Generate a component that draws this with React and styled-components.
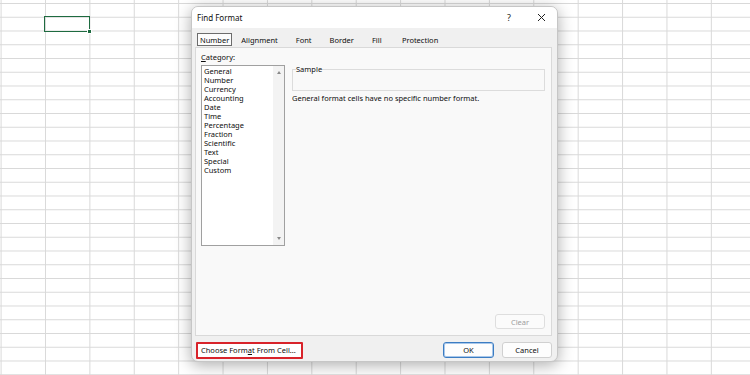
import React from 'react';
import styled, { createGlobalStyle } from 'styled-components';

const GlobalStyle = createGlobalStyle`
    html, body {
        margin: 0;
        padding: 0;
        background: #fff;
    }
    body {
        font-family: "Noto Sans", "Open Sans", sans-serif;
    }
`;

const Sheet = styled.div`
    position: relative;
    width: 750px;
    height: 375px;
    overflow: hidden;
    background-color: #fff;
    background-image: linear-gradient(to right, #d9d9d9 1px, transparent 1px),
        linear-gradient(to bottom, #d9d9d9 1px, transparent 1px);
    background-size: 44.4px 13.75px;
    background-position: 0.6px 3px;
`;

const ActiveCell = styled.div`
    position: absolute;
    left: 44px;
    top: 16px;
    width: 46px;
    height: 16px;
    box-sizing: border-box;
    border: 1.5px solid #1e6b40;

    &::after {
        content: '';
        position: absolute;
        right: -3px;
        bottom: -3px;
        width: 3px;
        height: 3px;
        background: #1e6b40;
        border: 1px solid #fff;
    }
`;

const Dialog = styled.div`
    position: absolute;
    left: 191px;
    top: 6px;
    width: 367px;
    height: 356px;
    box-sizing: border-box;
    display: flex;
    flex-direction: column;
    border: 1px solid #c6c6c6;
    border-radius: 7px;
    overflow: hidden;
    background: #f0f0f0;
    box-shadow: 0 3px 16px rgba(0, 0, 0, 0.33);
    font-size: 7.5px;
    color: #0d0d0d;
`;

const TitleBar = styled.div`
    display: flex;
    align-items: center;
    height: 21px;
    flex-shrink: 0;
    padding-left: 5px;
    background: #fff;
`;

const Title = styled.div`
    flex: 1;
    font-size: 8px;
`;

const TitleButton = styled.div`
    width: 32px;
    height: 21px;
    display: flex;
    align-items: center;
    justify-content: center;
    font-size: 9px;
    color: #222;
`;

const Body = styled.div`
    flex: 1;
    display: flex;
    flex-direction: column;
    padding: 5px 5px 0 3px;
    min-height: 0;
`;

const TabRow = styled.div`
    display: flex;
    height: 13px;
    margin-bottom: 1px;
    padding-left: 2px;
`;

const Tab = styled.div`
    display: flex;
    align-items: center;
    box-sizing: border-box;
    padding: 0 ${(p) => (p.$active ? '2px' : '8px')};
    min-width: ${(p) => p.$min || 0}px;
    border: 1px solid ${(p) => (p.$active ? '#6c6c6c' : 'transparent')};
    background: ${(p) => (p.$active ? '#fcfcfc' : 'transparent')};
    white-space: nowrap;
`;

const Panel = styled.div`
    flex: 1;
    display: grid;
    grid-template-columns: 84px 1fr;
    column-gap: 7px;
    padding: 4px 5px 6px 5px;
    border: 1px solid #d9d9d9;
    background: #f9f9f9;
`;

const LeftColumn = styled.div`
    display: flex;
    flex-direction: column;
`;

const Label = styled.div`
    line-height: 10px;
    height: 10px;
`;

const Key = styled.span`
    text-decoration: underline;
`;

const ListBox = styled.div`
    position: relative;
    box-sizing: border-box;
    height: 181px;
    margin-top: 3px;
    padding: 1px 12px 0 2px;
    border: 1px solid #a0a0a0;
    background: #fff;
`;

const ListItem = styled.div`
    line-height: 9px;
    height: 9px;
    white-space: nowrap;
`;

const Scrollbar = styled.div`
    position: absolute;
    top: 0;
    right: 0;
    bottom: 0;
    width: 11px;
    display: flex;
    flex-direction: column;
    justify-content: space-between;
    align-items: center;
    padding: 5px 0;
    box-sizing: border-box;
    background: #f3f3f3;
`;

const Arrow = styled.div`
    width: 0;
    height: 0;
    border-left: 2.5px solid transparent;
    border-right: 2.5px solid transparent;
    ${(p) =>
        p.$down
            ? 'border-top: 3px solid #8a8a8a;'
            : 'border-bottom: 3px solid #8a8a8a;'}
`;

const RightColumn = styled.div`
    display: flex;
    flex-direction: column;
    padding-right: 1px;
`;

const SampleBox = styled.fieldset`
    margin: 13px 0 0 0;
    padding: 0 3px;
    border: 1px solid #dcdcdc;
    min-width: 0;
`;

const SampleLegend = styled.legend`
    padding: 0;
    line-height: 9px;
    font-size: 7.5px;
`;

const SampleValue = styled.div`
    height: 16px;
`;

const Description = styled.div`
    margin-top: 3px;
    line-height: 9px;
`;

const Button = styled.button`
    box-sizing: border-box;
    height: ${(p) => p.$height || 15}px;
    width: ${(p) => p.$width || 50}px;
    padding: 0;
    font-family: inherit;
    font-size: 7.5px;
    color: ${(p) => (p.disabled ? '#9d9d9d' : '#0d0d0d')};
    background: #fdfdfd;
    border: 1px solid ${(p) => (p.disabled ? '#dedede' : '#d0d0d0')};
    border-radius: 3px;
    white-space: nowrap;
`;

const ClearButton = styled(Button)`
    margin-top: auto;
    align-self: flex-end;
    background: #fbfbfb;
`;

const DefaultButton = styled(Button)`
    border: 1px solid #3b7cc2;
    box-shadow: inset 0 0 0 1px #a8c7ea;
`;

const HighlightButton = styled(Button)`
    border: 2px solid #d8232a;
    border-radius: 1px;
    background: #fff;
    text-align: left;
    padding-left: 3px;
`;

const Footer = styled.div`
    height: 25px;
    flex-shrink: 0;
    display: flex;
    align-items: center;
    gap: 8px;
    padding: 3px 0 0 1px;
    box-sizing: border-box;
`;

const Spacer = styled.div`
    flex: 1;
`;

const categories = [
    'General',
    'Number',
    'Currency',
    'Accounting',
    'Date',
    'Time',
    'Percentage',
    'Fraction',
    'Scientific',
    'Text',
    'Special',
    'Custom',
];

const tabs = [
    { name: 'Number', active: true },
    { name: 'Alignment' },
    { name: 'Font' },
    { name: 'Border' },
    { name: 'Fill', min: 30 },
    { name: 'Protection' },
];

const CloseIcon = () => (
    <svg width='9' height='9' viewBox='0 0 9 9'>
        <path d='M1 1 L8 8 M8 1 L1 8' stroke='#222' strokeWidth='1' />
    </svg>
);

const App = () => {
    return (
        <>
            <GlobalStyle />
            <Sheet>
                <ActiveCell />
                <Dialog>
                    <TitleBar>
                        <Title>Find Format</Title>
                        <TitleButton>?</TitleButton>
                        <TitleButton>
                            <CloseIcon />
                        </TitleButton>
                    </TitleBar>
                    <Body>
                        <TabRow>
                            {tabs.map((t) => (
                                <Tab key={t.name} $active={t.active} $min={t.min}>
                                    {t.name}
                                </Tab>
                            ))}
                        </TabRow>
                        <Panel>
                            <LeftColumn>
                                <Label>
                                    <Key>C</Key>ategory:
                                </Label>
                                <ListBox>
                                    {categories.map((c) => (
                                        <ListItem key={c}>{c}</ListItem>
                                    ))}
                                    <Scrollbar>
                                        <Arrow />
                                        <Arrow $down />
                                    </Scrollbar>
                                </ListBox>
                            </LeftColumn>
                            <RightColumn>
                                <SampleBox>
                                    <SampleLegend>Sample</SampleLegend>
                                    <SampleValue />
                                </SampleBox>
                                <Description>
                                    General format cells have no specific number format.
                                </Description>
                                <ClearButton disabled>Clear</ClearButton>
                            </RightColumn>
                        </Panel>
                        <Footer>
                            <HighlightButton $width={107} $height={17}>
                                Choose Form<Key>a</Key>t From Cell...
                            </HighlightButton>
                            <Spacer />
                            <DefaultButton $width={51} $height={16}>
                                OK
                            </DefaultButton>
                            <Button $width={50} $height={16}>
                                Cancel
                            </Button>
                        </Footer>
                    </Body>
                </Dialog>
            </Sheet>
        </>
    );
};

export default App;
